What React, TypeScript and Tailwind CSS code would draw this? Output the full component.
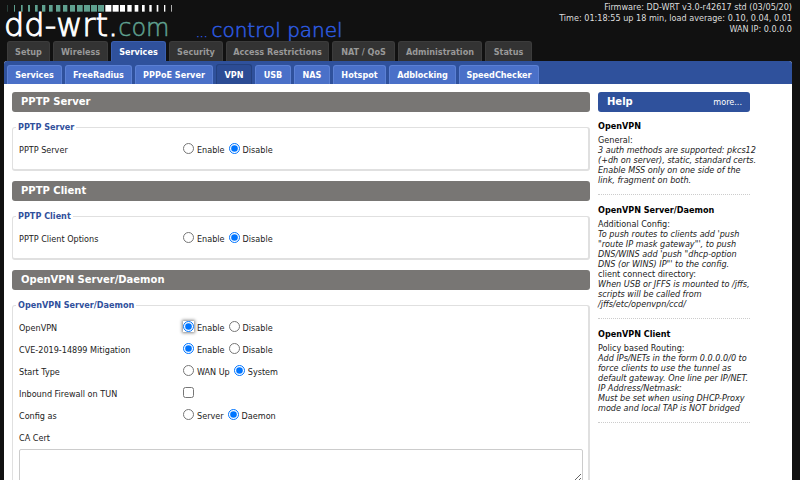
import clsx from "clsx";
import type { ReactNode } from "react";

interface Tab {
	name: string;
	width: string;
}

const mainTabs: Tab[] = [
	{ name: "Setup", width: "w-[43px]" },
	{ name: "Wireless", width: "w-[55px]" },
	{ name: "Services", width: "w-[55px]" },
	{ name: "Security", width: "w-[54px]" },
	{ name: "Access Restrictions", width: "w-[103px]" },
	{ name: "NAT / QoS", width: "w-[63px]" },
	{ name: "Administration", width: "w-[84px]" },
	{ name: "Status", width: "w-[47px]" }
];

const subTabs: Tab[] = [
	{ name: "Services", width: "w-[55px]" },
	{ name: "FreeRadius", width: "w-[67px]" },
	{ name: "PPPoE Server", width: "w-[78px]" },
	{ name: "VPN", width: "w-[36px]" },
	{ name: "USB", width: "w-[36px]" },
	{ name: "NAS", width: "w-[36px]" },
	{ name: "Hotspot", width: "w-[53px]" },
	{ name: "Adblocking", width: "w-[67px]" },
	{ name: "SpeedChecker", width: "w-[80px]" }
];

// [x, width] in thirds of a pixel
const tealBars = [
	[22, 1], [42, 3], [63, 5], [84, 6], [105, 8], [126, 10], [147, 11],
	[168, 13], [189, 13], [210, 15], [231, 17], [252, 18], [273, 18], [294, 18]
];

const whiteBars = [
	[316, 18], [338, 18], [360, 15], [382, 13], [404, 11],
	[426, 8], [448, 7], [470, 5], [492, 4], [514, 2]
];

function Logo() {
	return (
		<div className="w-[192px]">
			<svg width="180" height="7" viewBox="12 0 540 21" className="block">
				{tealBars.map(([x, w]) => (
					<rect key={x} x={x} y="0" width={w} height="20" fill="#5fa08f" />
				))}
				{whiteBars.map(([x, w]) => (
					<rect key={x} x={x} y="0" width={w} height="20" fill="#fff" />
				))}
			</svg>
			<div className="font-['DejaVu_Sans'] font-extralight whitespace-nowrap text-[32px] leading-[26px] text-white [-webkit-text-stroke:1px_#fff]">
				dd-wrt.
				<span className="text-[24px] text-[#5fa08f] [-webkit-text-stroke:0.5px_#5fa08f]">com</span>
			</div>
		</div>
	);
}

function Heading({ children }: { children: ReactNode }) {
	return (
		<h2 className="flex h-5 items-center rounded-[3px] bg-[#787674] px-[9px] font-['DejaVu_Sans'] text-[10px] font-bold text-white">
			{children}
		</h2>
	);
}

function Section({ title, children }: { title: string; children: ReactNode }) {
	return (
		<section className="mb-[10px]">
			<Heading>{title}</Heading>
			<fieldset className="mt-[9px] rounded-[3px] border border-r-2 border-b-2 border-[#e0e0e0] pr-[5px] pb-2 pl-[6px]">
				<legend className="-ml-[3px] px-[2px] text-[9px] leading-[12px] font-bold text-[#30509c]">
					{title}
				</legend>
				<div className="pt-[6px]">{children}</div>
			</fieldset>
		</section>
	);
}

interface RadioRowProps {
	label: string;
	name: string;
	options: string[];
	value: string;
	focused?: boolean;
}

function RadioRow({ label, name, options, value, focused }: RadioRowProps) {
	return (
		<div role="radiogroup" aria-label={label} className="flex h-[22px] items-center">
			<span className="w-[164px]">{label}</span>
			<div className="flex gap-1">
				{options.map(option => (
					<label key={option} className="flex items-center gap-[3px]">
						<input
							type="radio"
							name={name}
							defaultChecked={option === value}
							className={clsx(
								"mb-[3px] h-[11px] w-[11px]",
								focused && option === value && "rounded-[2px] shadow-[0_0_3px_1px_#888]"
							)}
						/>
						{option}
					</label>
				))}
			</div>
		</div>
	);
}

function HelpTopic({ title, children }: { title: string; children: ReactNode }) {
	return (
		<div className="border-b border-dotted border-[#ccc] pb-[9px]">
			<h4 className="mb-[3px] font-bold leading-[12px] text-black">{title}</h4>
			{children}
		</div>
	);
}

export default function App() {
	return (
		<div className="h-screen overflow-hidden bg-[#111] pr-2 pl-1 font-['DejaVu_Sans_Condensed','DejaVu_Sans',sans-serif] text-[9px] leading-[12px] text-[#222]">
			<header className="flex h-[41px] pt-[5px]">
				<Logo />
				<h1 className="flex items-baseline gap-1 pt-[13px] font-['DejaVu_Sans'] text-[20px] leading-[24px] font-extralight whitespace-nowrap text-[#2d5be0] [-webkit-text-stroke:0.5px_#2d5be0]">
					<span className="text-[12px]">...</span>control panel
				</h1>
				<div className="-mt-[3px] ml-auto text-right leading-[11px] whitespace-nowrap text-[#ddd]">
					<p>Firmware: DD-WRT v3.0-r42617 std (03/05/20)</p>
					<p>Time: 01:18:55 up 18 min, load average: 0.10, 0.04, 0.01</p>
					<p>WAN IP: 0.0.0.0</p>
				</div>
			</header>

			<nav className="flex gap-[3px] pl-[3px]">
				{mainTabs.map(tab => (
					<a
						key={tab.name}
						href="#"
						className={clsx(
							"flex h-5 items-center justify-center rounded-t-[3px] border border-b-0 font-bold whitespace-nowrap",
							tab.width,
							tab.name === "Services"
								? "border-[#3a5fb0] bg-[#2f519c] text-white"
								: "border-[#3c3c3c] bg-[#333] text-[#999]"
						)}
					>
						{tab.name}
					</a>
				))}
			</nav>

			<div className="min-h-full rounded-t-[3px] bg-white">
				<nav className="flex h-[23px] items-end gap-[3px] rounded-t-[3px] bg-[#2f519c] pl-[3px]">
					{subTabs.map(tab => (
						<a
							key={tab.name}
							href="#"
							className={clsx(
								"flex items-center justify-center rounded-t-[3px] border border-b-0 font-bold whitespace-nowrap text-white",
								tab.width,
								tab.name === "VPN"
									? "h-5 border-[#24417f] bg-[#2c4c94]"
									: "h-[19px] border-[#5b80d4] bg-[#4a70c8]"
							)}
						>
							{tab.name}
						</a>
					))}
				</nav>

				<div className="flex gap-2 pt-2 pr-[42px] pl-2">
					<main className="min-w-0 flex-1">
						<Section title="PPTP Server">
							<RadioRow label="PPTP Server" name="pptpd" options={["Enable", "Disable"]} value="Disable" />
						</Section>
						<Section title="PPTP Client">
							<RadioRow label="PPTP Client Options" name="pptpc" options={["Enable", "Disable"]} value="Disable" />
						</Section>
						<Section title="OpenVPN Server/Daemon">
							<RadioRow label="OpenVPN" name="openvpn" options={["Enable", "Disable"]} value="Enable" focused />
							<RadioRow label="CVE-2019-14899 Mitigation" name="cve" options={["Enable", "Disable"]} value="Enable" />
							<RadioRow label="Start Type" name="start" options={["WAN Up", "System"]} value="System" />
							<div className="flex h-[22px] items-center">
								<label htmlFor="firewall" className="w-[164px]">Inbound Firewall on TUN</label>
								<input id="firewall" type="checkbox" className="mb-[3px] h-[11px] w-[11px]" />
							</div>
							<RadioRow label="Config as" name="config" options={["Server", "Daemon"]} value="Daemon" />
							<label htmlFor="cacert" className="flex h-[22px] items-center">CA Cert</label>
							<textarea
								id="cacert"
								className="block h-[34px] w-full rounded-[2px] border border-[#ccc]"
							/>
						</Section>
					</main>

					<aside className="w-[152px] shrink-0 leading-[10px]">
						<div className="mb-2 flex h-5 items-center justify-between rounded-[3px] bg-[#2f519c] pr-2 pl-[9px] text-white">
							<h2 className="font-['DejaVu_Sans'] text-[10px] font-bold">Help</h2>
							<a href="#">more...</a>
						</div>
						<div className="flex flex-col gap-[9px] whitespace-nowrap">
							<HelpTopic title="OpenVPN">
								<p>General:</p>
								<p className="italic">
									3 auth methods are supported: pkcs12<br />
									(+dh on server), static, standard certs.<br />
									Enable MSS only on one side of the<br />
									link, fragment on both.
								</p>
							</HelpTopic>
							<HelpTopic title="OpenVPN Server/Daemon">
								<p>Additional Config:</p>
								<p className="italic">
									To push routes to clients add 'push<br />
									"route IP mask gateway"', to push<br />
									DNS/WINS add 'push "dhcp-option<br />
									DNS (or WINS) IP"' to the config.
								</p>
								<p>client connect directory:</p>
								<p className="italic">
									When USB or JFFS is mounted to /jffs,<br />
									scripts will be called from<br />
									/jffs/etc/openvpn/ccd/
								</p>
							</HelpTopic>
							<HelpTopic title="OpenVPN Client">
								<p>Policy based Routing:</p>
								<p className="italic">
									Add IPs/NETs in the form 0.0.0.0/0 to<br />
									force clients to use the tunnel as<br />
									default gateway. One line per IP/NET.<br />
									IP Address/Netmask:<br />
									Must be set when using DHCP-Proxy<br />
									mode and local TAP is NOT bridged
								</p>
							</HelpTopic>
						</div>
					</aside>
				</div>
			</div>
		</div>
	);
}
